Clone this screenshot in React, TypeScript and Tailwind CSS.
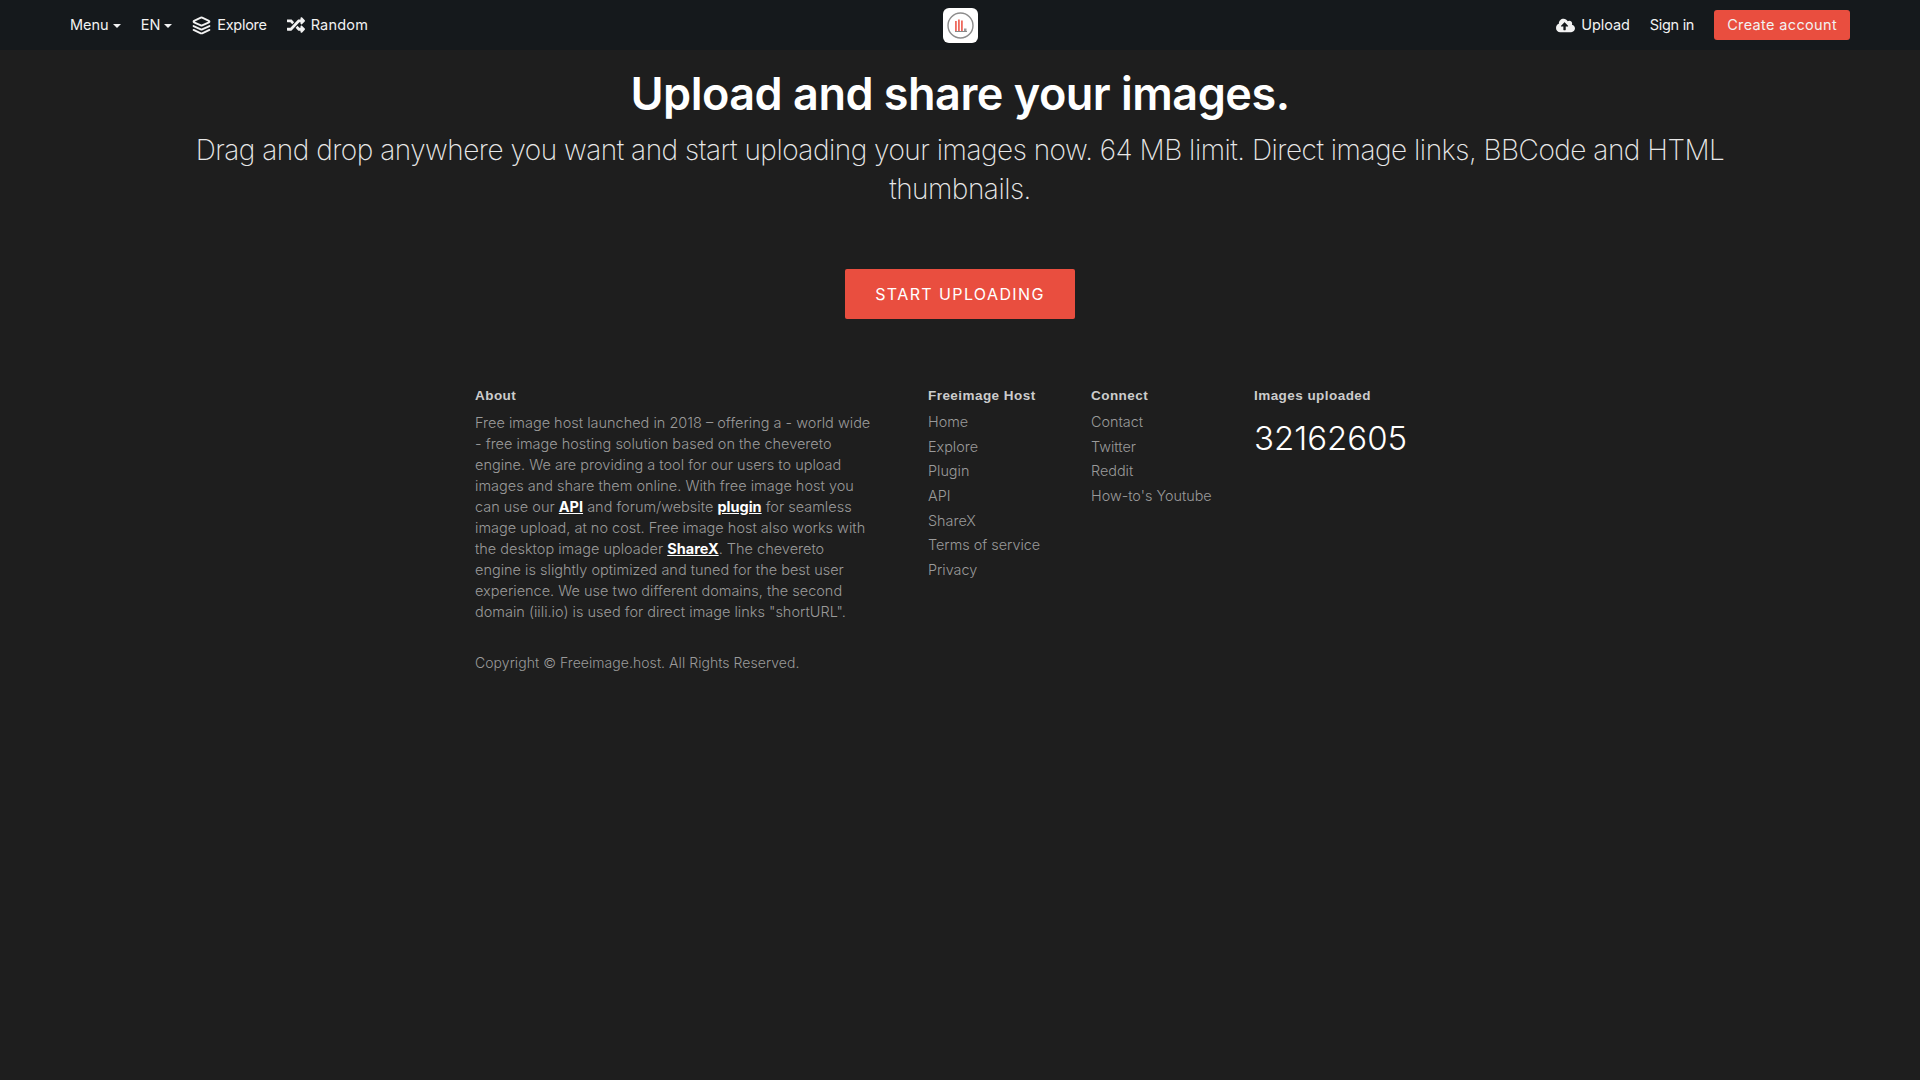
import { FaCloudUploadAlt, FaRandom } from "react-icons/fa";
import { LuLayers } from "react-icons/lu";

const Caret = () => <span className="ml-[4px] inline-block w-0 h-0 border-x-[4px] border-x-transparent border-t-[4px] border-t-[#f2f2f2] align-middle" />;

function Column({ title, items, className }: { title: string; items: string[]; className: string }) {
  return (
    <div className={className}>
      <h4 className="font-['Liberation_Sans',sans-serif] text-[13.5px] font-bold leading-[17px] tracking-[0.45px] text-[#cccccc] mb-[6px]">{title}</h4>
      <ul className="flex flex-col">
        {items.map((i) => (
          <li key={i} className="text-[14.4px] leading-[24.67px] font-light text-[#9a9a9a] whitespace-nowrap">{i}</li>
        ))}
      </ul>
    </div>
  );
}

const B = ({ children }: { children: string }) => <a className="font-bold text-white underline">{children}</a>;

export default function App() {
  return (
    <div className="min-h-[1080px] bg-[#1e1e1e] font-['Inter','Noto_Sans',sans-serif] font-normal text-[#f2f2f2]">
      <header className="h-[50px] bg-[#15191c] flex items-center justify-between px-[70px] relative">
        <nav className="flex items-center gap-5 text-[14.5px]">
          <span>Menu<Caret /></span>
          <span>EN<Caret /></span>
          <span className="flex items-center gap-[6px] tracking-[-0.3px]"><LuLayers size={19} strokeWidth={2.4} />Explore</span>
          <span className="flex items-center gap-[6px] tracking-[0.2px]"><FaRandom size={18} />Random</span>
        </nav>
        <div className="absolute left-[943px] top-[8px] w-[35px] h-[35px] rounded-[6px] bg-white flex items-center justify-center">
          <svg width="29" height="29" viewBox="0 0 29 29" fill="none">
            <circle cx="14.5" cy="14.5" r="12.5" stroke="#8c8c8c" strokeWidth="1.4" />
            <rect x="9" y="10" width="1.8" height="10" fill="#ee6a5e" />
            <rect x="12" y="8.5" width="1.8" height="11.5" fill="#ee6a5e" />
            <rect x="15" y="9.5" width="1.8" height="10.5" fill="#ee6a5e" />
            <rect x="18" y="17.5" width="2.5" height="2.5" fill="#999" />
            <rect x="9" y="20" width="12" height="1" fill="#888" />
          </svg>
        </div>
        <nav className="flex items-center gap-5 text-[14.5px]">
          <span className="flex items-center gap-[6px] tracking-[-0.1px]"><FaCloudUploadAlt size={19} />Upload</span>
          <span className="tracking-[-0.3px]">Sign in</span>
          <span className="h-[30px] px-[13px] flex items-center bg-[#e94e3f] rounded-[3px] tracking-[0.35px]">Create account</span>
        </nav>
      </header>

      <section className="flex flex-col items-center text-center pt-[21px]">
        <h1 className="text-[45px] leading-[46px] font-semibold text-white tracking-[-0.5px] whitespace-nowrap">Upload and share your images.</h1>
        <p className="mt-[14px] text-[28px] leading-[39px] font-extralight text-[#e8e8e8] tracking-[-0.5px] whitespace-nowrap">
          Drag and drop anywhere you want and start uploading your images now. 64 MB limit. Direct image links, BBCode and HTML<br />thumbnails.
        </p>
        <button className="mt-[60px] h-[50px] w-[230px] bg-[#e94e3f] text-white text-[16px] tracking-[1.4px] rounded-[2px]">START UPLOADING</button>
      </section>

      <footer className="flex pl-[475px] pt-[68px]">
        <div className="w-[453px]">
          <h4 className="font-['Liberation_Sans',sans-serif] text-[13.5px] font-bold leading-[17px] tracking-[0.45px] text-[#cccccc] mb-[8px]">About</h4>
          <p className="text-[14.5px] leading-[21px] font-light text-[#9a9a9a] whitespace-nowrap">
            Free image host launched in 2018 – offering a - world wide<br />
            - free image hosting solution based on the chevereto<br />
            engine. We are providing a tool for our users to upload<br />
            images and share them online. With free image host you<br />
            can use our <B>API</B> and forum/website <B>plugin</B> for seamless<br />
            image upload, at no cost. Free image host also works with<br />
            the desktop image uploader <B>ShareX</B>. The chevereto<br />
            engine is slightly optimized and tuned for the best user<br />
            experience. We use two different domains, the second<br />
            domain (iili.io) is used for direct image links "shortURL".
          </p>
          <p className="mt-[30px] text-[14px] leading-[21px] font-light text-[#9a9a9a] tracking-[0.05px]">Copyright © Freeimage.host. All Rights Reserved.</p>
        </div>
        <Column className="w-[163px]" title="Freeimage Host" items={["Home", "Explore", "Plugin", "API", "ShareX", "Terms of service", "Privacy"]} />
        <Column className="w-[163px]" title="Connect" items={["Contact", "Twitter", "Reddit", "How-to's Youtube"]} />
        <div>
          <h4 className="font-['Liberation_Sans',sans-serif] text-[13.5px] font-bold leading-[17px] tracking-[0.45px] text-[#cccccc]">Images uploaded</h4>
          <div className="mt-[11px] text-[33px] leading-[46px] text-white font-light">32162605</div>
        </div>
      </footer>
    </div>
  );
}
